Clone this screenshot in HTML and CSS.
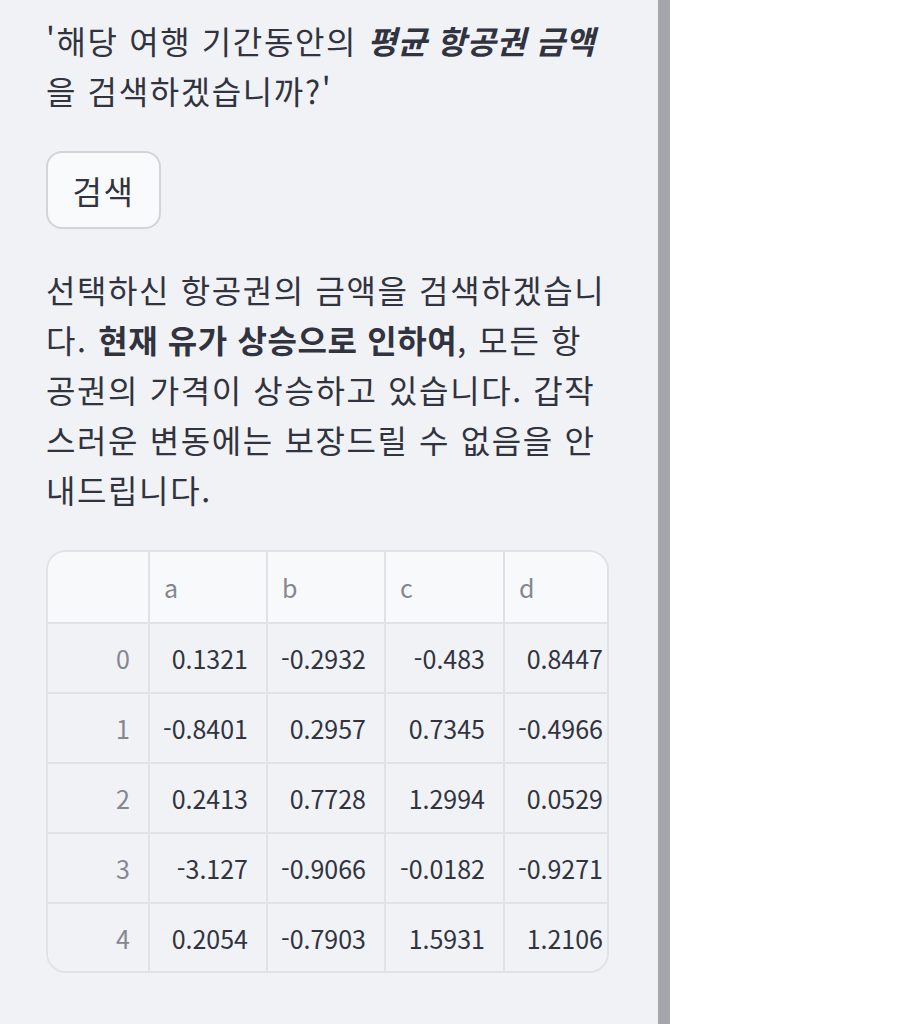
FILE: index.html
```html
<!DOCTYPE html>
<html lang="ko">
<head>
<meta charset="utf-8">
<link rel="stylesheet" href="styles.css">
</head>
<body>
<div class="page">
  <aside class="sidebar">
    <p class="text">'해당 여행 기간동안의 <strong><em>평균 항공권 금액</em></strong>을 검색하겠습니까?'</p>
    <button class="btn">검색</button>
    <p class="text">선택하신 항공권의 금액을 검색하겠습니다. <strong>현재 유가 상승으로 인하여</strong>, 모든 항공권의 가격이 상승하고 있습니다. 갑작스러운 변동에는 보장드릴 수 없음을 안내드립니다.</p>
    <div class="table">
      <div class="grid">
        <div class="cell head idx"></div>
        <div class="cell head">a</div>
        <div class="cell head">b</div>
        <div class="cell head">c</div>
        <div class="cell head">d</div>

        <div class="cell idx">0</div>
        <div class="cell">0.1321</div>
        <div class="cell">-0.2932</div>
        <div class="cell">-0.483</div>
        <div class="cell">0.8447</div>

        <div class="cell idx">1</div>
        <div class="cell">-0.8401</div>
        <div class="cell">0.2957</div>
        <div class="cell">0.7345</div>
        <div class="cell">-0.4966</div>

        <div class="cell idx">2</div>
        <div class="cell">0.2413</div>
        <div class="cell">0.7728</div>
        <div class="cell">1.2994</div>
        <div class="cell">0.0529</div>

        <div class="cell idx">3</div>
        <div class="cell">-3.127</div>
        <div class="cell">-0.9066</div>
        <div class="cell">-0.0182</div>
        <div class="cell">-0.9271</div>

        <div class="cell idx last">4</div>
        <div class="cell last">0.2054</div>
        <div class="cell last">-0.7903</div>
        <div class="cell last">1.5931</div>
        <div class="cell last">1.2106</div>
      </div>
    </div>
  </aside>
  <div class="scrollbar"></div>
  <main class="main"></main>
</div>
</body>
</html>
```
FILE: styles.css
```css
html, body {
  margin: 0;
  padding: 0;
  height: 100%;
  overflow: hidden;
}
body {
  font-family: "Noto Sans CJK KR", "Noto Sans", sans-serif;
  color: #31333f;
  background: #ffffff;
}
.page {
  display: flex;
  height: 1024px;
}
.sidebar {
  width: 658px;
  box-sizing: border-box;
  background: #f0f2f6;
  padding: 15px 49px 0 46px;
  display: flex;
  flex-direction: column;
  align-items: flex-start;
}
.scrollbar {
  width: 12px;
  background: #a4a6ad;
}
.main {
  flex: 1;
  background: #ffffff;
}
.text {
  margin: 0;
  font-size: 32px;
  line-height: 50px;
  letter-spacing: 1.6px;
  width: 563px;
}
.text strong {
  font-weight: 700;
  letter-spacing: 0.6px;
}
.text em {
  letter-spacing: 0.4px;
}
.btn {
  margin: 36px 0 35px 0;
  width: 115px;
  height: 78px;
  box-sizing: border-box;
  border: 2px solid #d3d4d9;
  border-radius: 16px;
  background: #f9fafb;
  font-family: inherit;
  font-size: 32px;
  letter-spacing: 1.5px;
  color: #31333f;
  padding: 0;
}
.table {
  margin-top: 36px;
  width: 563px;
  box-sizing: border-box;
  border: 2px solid #e0e2e7;
  border-radius: 20px;
  overflow: hidden;
}
.grid {
  display: grid;
  grid-template-columns: 102px 118px 118px 119px 118px;
  width: 575px;
}
.cell {
  box-sizing: border-box;
  height: 70px;
  border-right: 2px solid #e0e2e7;
  border-bottom: 2px solid #e0e2e7;
  font-size: 25px;
  display: flex;
  align-items: center;
  justify-content: flex-end;
  padding: 0 18px 0 14px;
  color: #31333f;
  background: #f0f2f6;
  white-space: nowrap;
}
.cell.head {
  height: 72px;
  background: #f8f9fb;
  justify-content: flex-start;
  color: #85878f;
}
.cell.idx {
  color: #85878f;
}
.cell.last {
  border-bottom: none;
  height: 67px;
}
```
